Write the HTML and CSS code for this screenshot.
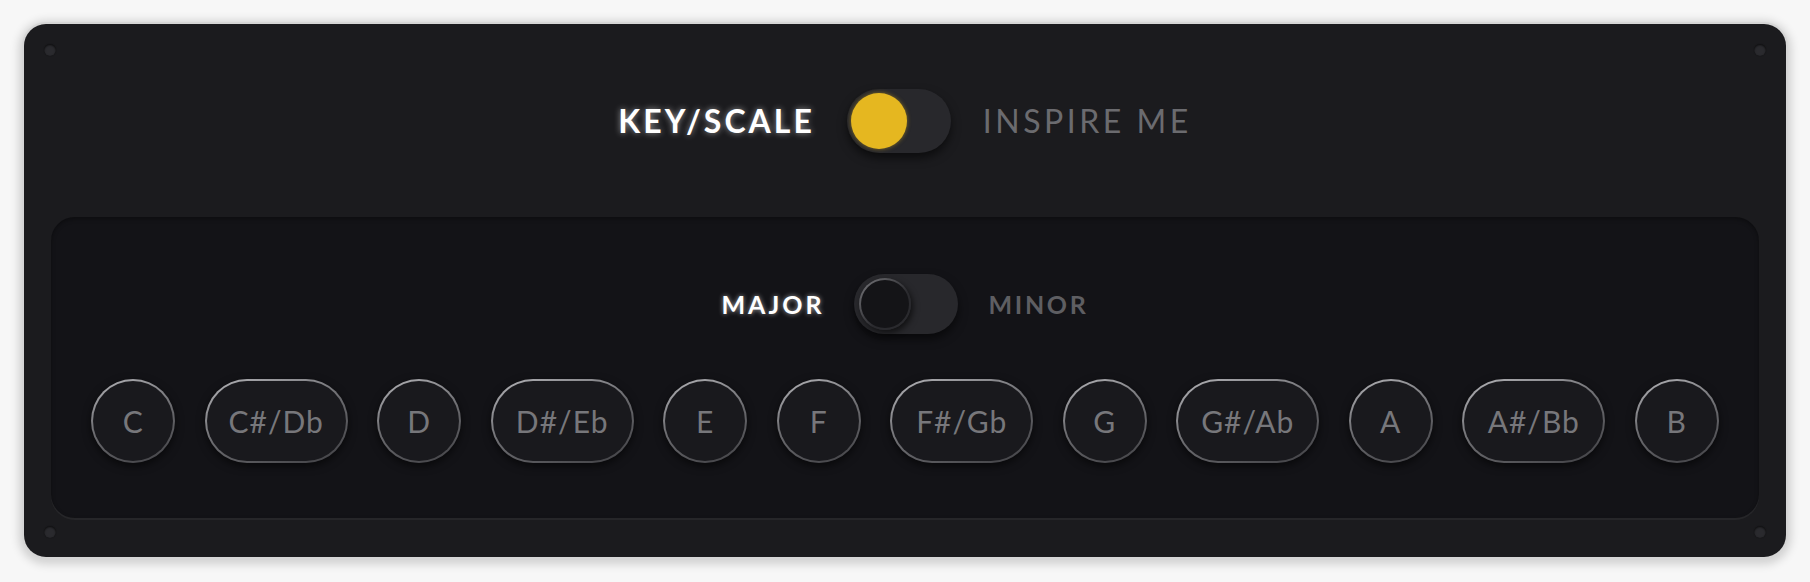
FILE: index.html
```html
<!DOCTYPE html>
<html lang="en">
<head>
    <meta charset="UTF-8">
    <meta name="viewport" content="width=device-width, initial-scale=1.0">
    <title>Key Scale Picker</title>
    <link rel="stylesheet" href="styles.css">
</head>
<body>
    <div class="panel">
        <span class="screw tl"></span>
        <span class="screw tr"></span>
        <span class="screw bl"></span>
        <span class="screw br"></span>

        <div class="mode-row">
            <span class="mode-label active">KEY/SCALE</span>
            <div class="switch switch-main">
                <span class="knob knob-gold"></span>
            </div>
            <span class="mode-label">INSPIRE ME</span>
        </div>

        <div class="inner">
            <div class="scale-row">
                <span class="scale-label active">MAJOR</span>
                <div class="switch switch-small">
                    <span class="knob knob-dark"></span>
                </div>
                <span class="scale-label">MINOR</span>
            </div>

            <div class="notes">
                <button class="note">C</button>
                <button class="note wide">C#/Db</button>
                <button class="note">D</button>
                <button class="note wide">D#/Eb</button>
                <button class="note">E</button>
                <button class="note">F</button>
                <button class="note wide">F#/Gb</button>
                <button class="note">G</button>
                <button class="note wide">G#/Ab</button>
                <button class="note">A</button>
                <button class="note wide">A#/Bb</button>
                <button class="note">B</button>
            </div>
        </div>
    </div>
</body>
</html>
```

FILE: styles.css
```css
:root {
    --page-bg: #f7f7f7;
    --panel-bg: #1b1b1e;
    --inner-bg: #131317;
    --track-bg: #28282c;
    --gold: #e5b720;
    --muted: #6b6b6f;
    --note-text: #77777b;
}

body {
    margin: 0;
    padding: 24px;
    background-color: var(--page-bg);
    font-family: Lato, 'Open Sans', sans-serif;
}

.panel {
    position: relative;
    width: 1762px;
    height: 533px;
    box-sizing: border-box;
    background-color: var(--panel-bg);
    border-radius: 22px;
    box-shadow: 0 0 0 2px #d6d6d6, 0 2px 10px 5px rgba(0, 0, 0, 0.16);
    display: flex;
    flex-direction: column;
}

.screw {
    position: absolute;
    width: 12px;
    height: 12px;
    border-radius: 50%;
    background-color: #2a2a2e;
    box-shadow: inset 0 1px 2px rgba(0, 0, 0, 0.7), 0 0 1px rgba(0, 0, 0, 0.6);
}

.screw.tl { left: 20px; top: 20px; }
.screw.tr { right: 20px; top: 20px; }
.screw.bl { left: 20px; bottom: 19px; }
.screw.br { right: 20px; bottom: 19px; }

/* top mode switch */
.mode-row {
    height: 193px;
    display: flex;
    align-items: center;
    justify-content: center;
    gap: 32px;
}

.mode-label {
    font-size: 32px;
    letter-spacing: 3.5px;
    color: var(--muted);
}

.mode-label.active {
    font-weight: 700;
    letter-spacing: 3px;
    color: #ffffff;
    text-shadow: 0 0 6px rgba(255, 255, 255, 0.55);
}

.switch {
    box-sizing: border-box;
    display: flex;
    align-items: center;
    background-color: var(--track-bg);
    box-shadow: 0 5px 10px rgba(0, 0, 0, 0.55);
}

.switch-main {
    width: 104px;
    height: 64px;
    padding: 0 4px;
    border-radius: 32px;
}

.switch-small {
    width: 104px;
    height: 60px;
    padding: 0 5px;
    border-radius: 30px;
}

.knob {
    display: block;
    border-radius: 50%;
}

.knob-gold {
    width: 56px;
    height: 56px;
    background-color: var(--gold);
    box-shadow: 0 0 4px rgba(229, 183, 32, 0.5);
}

.knob-dark {
    width: 52px;
    height: 52px;
    box-sizing: border-box;
    border: 2px solid transparent;
    background: linear-gradient(#141417, #141417) padding-box,
                linear-gradient(135deg, #7a7a7e, #2a2a2e 60%) border-box;
    box-shadow: 2px 3px 6px rgba(0, 0, 0, 0.6);
}

/* inner scale panel */
.inner {
    margin: 0 27px;
    height: 301px;
    box-sizing: border-box;
    padding-top: 55px;
    background-color: var(--inner-bg);
    border-radius: 24px;
    box-shadow: 0 2px 0 rgba(255, 255, 255, 0.05), inset 0 2px 4px rgba(0, 0, 0, 0.35);
}

.scale-row {
    height: 64px;
    display: flex;
    align-items: center;
    justify-content: center;
    gap: 30px;
}

.scale-label {
    font-size: 25px;
    font-weight: 700;
    letter-spacing: 2.7px;
    color: #5e5e62;
}

.scale-label.active {
    color: #ffffff;
    letter-spacing: 3px;
    text-shadow: 0 0 5px rgba(255, 255, 255, 0.6);
}

.notes {
    margin-top: 43px;
    display: flex;
    justify-content: center;
    gap: 29.5px;
}

.note {
    width: 84px;
    height: 84px;
    padding: 0;
    box-sizing: border-box;
    border: 2px solid transparent;
    border-radius: 42px;
    background: linear-gradient(#19191d, #19191d) padding-box,
                linear-gradient(160deg, #b4b4b8, #6a6a6e 50%, #404044) border-box;
    box-shadow: 0 3px 8px rgba(0, 0, 0, 0.6);
    font-family: Lato, 'Open Sans', sans-serif;
    font-size: 30px;
    letter-spacing: 1px;
    color: var(--note-text);
    cursor: pointer;
}

.note.wide {
    width: 143px;
}
```
